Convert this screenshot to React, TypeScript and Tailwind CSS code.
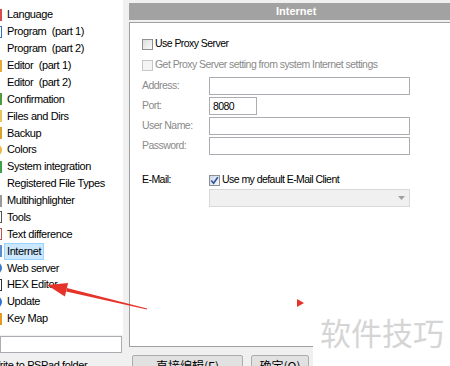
import React from "react";

const items: { label: string; icon: string }[] = [
  { label: "Language", icon: "bg-[#d94a4a]" },
  { label: "Program  (part 1)", icon: "bg-white border border-[#3b6fb6]" },
  { label: "Program  (part 2)", icon: "bg-transparent" },
  { label: "Editor  (part 1)", icon: "bg-[#e8a93a]" },
  { label: "Editor  (part 2)", icon: "bg-transparent" },
  { label: "Confirmation", icon: "bg-[#4f9a3c]" },
  { label: "Files and Dirs", icon: "bg-[#e8c45a]" },
  { label: "Backup", icon: "bg-[#d9a32b]" },
  { label: "Colors", icon: "bg-[#f0b63a] rounded-full" },
  { label: "System integration", icon: "bg-[#3fa04a]" },
  { label: "Registered File Types", icon: "bg-transparent" },
  { label: "Multihighlighter", icon: "bg-[#9a9a9a]" },
  { label: "Tools", icon: "bg-white border border-[#555]" },
  { label: "Text difference", icon: "bg-white border border-[#b55]" },
  { label: "Internet", icon: "bg-[#5d8fd0]" },
  { label: "Web server", icon: "bg-[#3a78c8] rounded-full" },
  { label: "HEX Editor", icon: "bg-white border border-[#333]" },
  { label: "Update", icon: "bg-[#2f6fd0] rounded-full" },
  { label: "Key Map", icon: "bg-[#e39a24]" },
];

function Check({ checked, disabled }: { checked?: boolean; disabled?: boolean }) {
  return (
    <span
      className={
        "flex h-[11px] w-[11px] shrink-0 items-center justify-center border " +
        (disabled
          ? "border-[#c6c6c6] bg-[#f4f4f4]"
          : checked
            ? "border-[#8e8f8f] bg-gradient-to-br from-[#c9d7ee] to-[#f4f7fc]"
            : "border-[#8e8f8f] bg-gradient-to-br from-[#dcdcdc] to-[#fbfbfb]")
      }
    >
      {checked && (
        <svg width="9" height="9" viewBox="0 0 9 9">
          <path d="M1.3 4.6 L3.6 7.2 L7.8 1.3" fill="none" stroke="#2f4f8f" strokeWidth="1.5" />
        </svg>
      )}
    </span>
  );
}

function Field({ label, value, w }: { label: string; value?: string; w: string }) {
  return (
    <div className="flex h-[18px] items-center">
      <span className="w-[67px] text-[#8a8a8a]">{label}</span>
      <div className={"h-[18px] border border-[#abadb3] bg-white pl-[3px] leading-[16px] text-black " + w}>
        {value}
      </div>
    </div>
  );
}

export default function App() {
  return (
    <div className="relative flex h-[366px] w-[450px] overflow-hidden bg-[#f0f0f0] font-['Liberation_Sans',sans-serif] text-[10.5px] tracking-[-0.55px] text-black">
      <div className="flex w-[123px] shrink-0 flex-col">
        <div className="h-[335px] shrink-0 overflow-hidden bg-white pt-[6.5px]">
          {items.map((it) => {
            const sel = it.label === "Internet";
            return (
              <div key={it.label} className="-ml-[12px] flex h-[16.89px] items-center whitespace-pre">
                <span className={"h-[12px] w-[14px] shrink-0 " + it.icon} />
                <span
                  className={
                    "ml-[2px] border px-[2px] text-[11px] leading-[15px] tracking-[-0.4px] " +
                    (sel ? "border-[#99d1ff] bg-[#cce8ff]" : "border-transparent")
                  }
                >
                  {it.label}
                </span>
              </div>
            );
          })}
        </div>
        <div className="mt-[1px] h-[17px] w-[122px] shrink-0 border border-[#abadb3] bg-white" />
        <div className="-ml-[10px] mt-[5px] shrink-0 whitespace-nowrap text-[11px] leading-[14px] tracking-[-0.4px]">
          Write to PSPad folder
        </div>
      </div>

      <div className="flex flex-1 flex-col pl-[6px]">
        <div className="mt-[3px] flex h-[17px] shrink-0 items-center bg-[#a2a2a2] pl-[147px] text-[11px] font-bold tracking-normal text-white">
          Internet
        </div>
        <div className="mt-[2px] h-[325px] shrink-0 border-l border-t border-b border-[#a0a0a0] bg-white pl-[12px] pt-[14px]">
          <div className="flex h-[14px] items-center gap-[2px]">
            <Check />
            <span>Use Proxy Server</span>
          </div>
          <div className="mt-[7px] flex h-[14px] items-center gap-[2px] text-[#8a8a8a]">
            <Check disabled />
            <span>Get Proxy Server setting from system Internet settings</span>
          </div>
          <div className="mt-[5px] flex flex-col gap-[2px]">
            <Field label="Address:" w="w-[201px]" />
            <Field label="Port:" value="8080" w="w-[48px]" />
            <Field label="User Name:" w="w-[201px]" />
            <Field label="Password:" w="w-[201px]" />
          </div>
          <div className="mt-[18px] flex h-[14px] items-center">
            <span className="w-[67px]">E-Mail:</span>
            <Check checked />
            <span className="ml-[2px]">Use my default E-Mail Client</span>
          </div>
          <div className="ml-[67px] mt-[2px] flex h-[18px] w-[201px] items-center justify-end border border-[#d9d9d9] bg-[#f0f0f0] pr-[4px]">
            <svg width="7" height="4" viewBox="0 0 7 4">
              <path d="M0 0 H7 L3.5 4 Z" fill="#a0a0a0" />
            </svg>
          </div>
        </div>
        <div className="mt-[8px] flex shrink-0 gap-[8px] pl-[3px] tracking-normal">
          <div className="flex h-[22px] w-[111px] justify-center rounded-[2px] border border-[#adadad] bg-[#e1e1e1] pt-[2px] font-['Noto_Sans_CJK_SC',sans-serif] text-[12px] leading-[16px]">
            直接编辑(E)
          </div>
          <div className="flex h-[22px] w-[58px] justify-center rounded-[2px] border border-[#adadad] bg-[#e1e1e1] pt-[2px] font-['Noto_Sans_CJK_SC',sans-serif] text-[12px] leading-[16px]">
            确定(O)
          </div>
        </div>
      </div>

      <div className="absolute left-[313px] top-[305px] h-[61px] w-[137px] bg-white pl-[7px] pt-[9px] font-['Noto_Sans_CJK_SC',sans-serif] text-[31px] leading-[36px] tracking-normal text-[#d5d5d5]">
        软件技巧
      </div>

      <svg className="pointer-events-none absolute left-0 top-0" width="450" height="366" viewBox="0 0 450 366">
        <polygon points="66.1,291.4 66.9,288 147.1,308.5 146.9,309.5" fill="#e5332a" />
        <polygon points="47,285 68.1,282.9 64.9,296.5" fill="#e5332a" />
        <polygon points="297,299 304,303 297,307" fill="#e5332a" />
      </svg>
    </div>
  );
}
